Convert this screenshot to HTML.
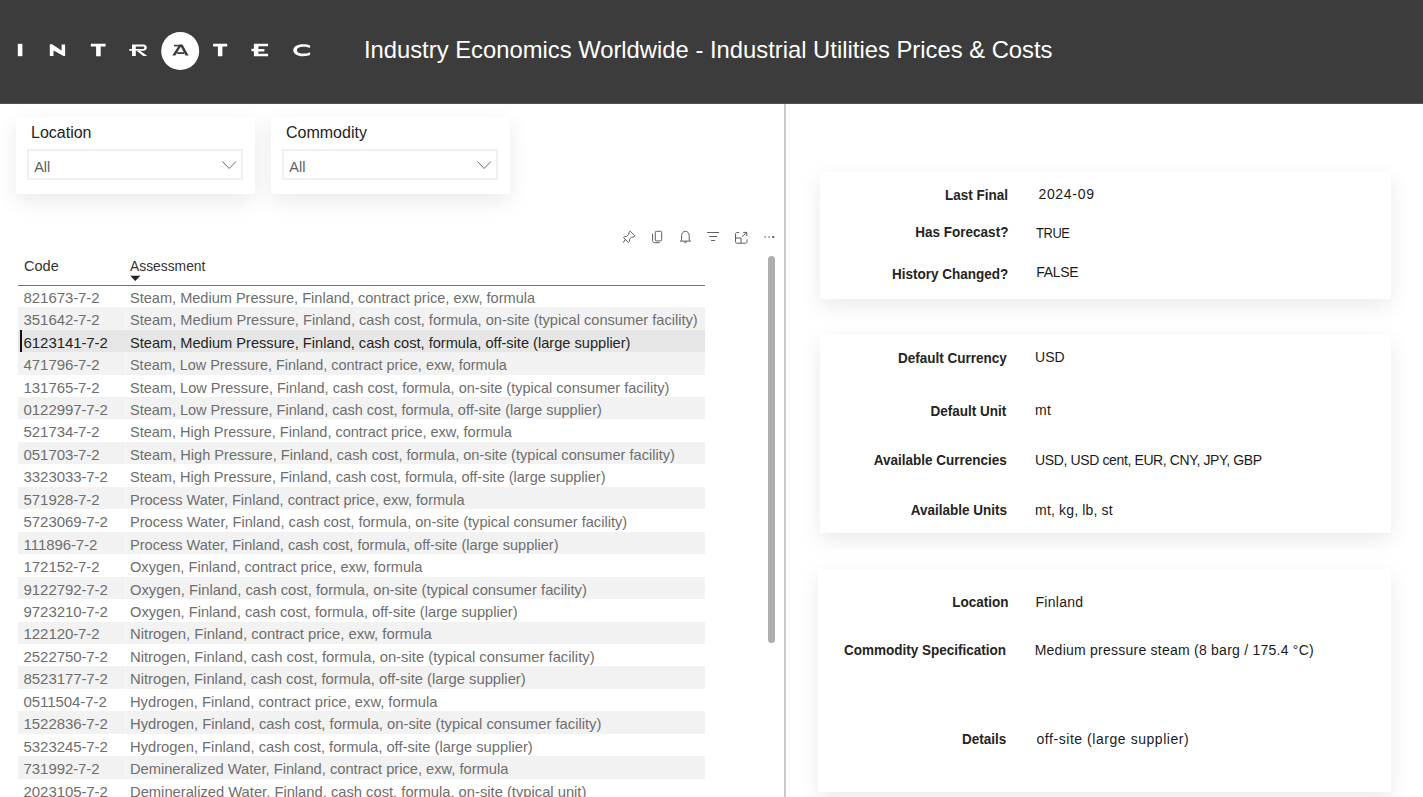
<!DOCTYPE html>
<html><head><meta charset="utf-8"><style>
html,body{margin:0;padding:0;width:1423px;height:797px;overflow:hidden;background:#fff;}
body{position:relative;font-family:"Liberation Sans",sans-serif;}
.t{position:absolute;white-space:nowrap;line-height:normal;}
.a{position:absolute;}
</style></head><body>
<div class="a" style="left:0;top:0;width:1423px;height:103px;background:#3c3c3c;"></div>
<div class="a" style="left:0;top:103px;width:1423px;height:1px;background:#0d60bd;"></div>
<svg class="a" style="left:0;top:0" width="360" height="103" viewBox="0 0 360 103">
<g fill="#fff">
<rect x="17.8" y="43.8" width="4.6" height="12.4"/>
<path d="M49.8 44.3h2.2l9.6 6.1v-5.9h3.5v11.6h-1.6l-10-5.7v5.7h-3.7z"/>
<path d="M90.8 43.8h14.8v2.6h-4.9v9.8h-4.6v-9.8h-5.3z"/>
<path d="M132 44.5h11.3c2.3 0 3.5 1.4 3.5 3.1c0 1.7-1.2 3.2-3.5 3.2h-7.5v5.3h-3.8v-5.3h-2.7v-1.8h2.7z M135.8 46.4v2.6h7.1c0.8 0 1.4-0.5 1.4-1.3s-0.6-1.3-1.4-1.3z"/>
<path d="M136.6 50.8h3.6l7 5.3h-3.9z"/>
<circle cx="180.2" cy="51" r="19"/>
<path d="M213.1 43.8h14.1v2.6h-4.8v9.8h-4.5v-9.8h-4.8z"/>
<path d="M253.9 43.8h14.2v2.5h-9.7v2.6h6v2.5h-6v2.4h9.7v2.4h-14.2v-5h-2.4v-2.5h2.4z"/>
<path d="M310.1 45.6C308.5 44.6 306.3 44.2 303.2 44.2C297 44.2 293.3 46.8 293.3 50.2C293.3 53.6 297 56.2 303.2 56.2C306.3 56.2 308.5 55.8 310.1 54.8V52.3C308.8 53 306.6 53.6 303.6 53.6C299.2 53.6 296.9 52.2 296.9 50.2C296.9 48.2 299.2 46.7 303.6 46.7C306.6 46.7 308.8 47.3 310.1 48Z"/>
</g>
<g fill="#3c3c3c">
<rect x="174" y="44.8" width="7.8" height="1.6"/>
<path d="M179.2 44.8h2.8l-6.7 10.7h-3z"/>
<path d="M179.8 44.8h2.8l6 10.7h-3.1z"/>
<rect x="177.2" y="52.2" width="6.8" height="1.8"/>
</g>
</svg>
<div class="t" style="top:36.06px;font-size:23.8px;color:#fff;left:363.90px;">Industry Economics Worldwide - Industrial Utilities Prices &amp; Costs</div>
<div class="a" style="left:784px;top:104px;width:2px;height:693px;background:#cbcbcb;"></div>
<div class="a" style="left:16px;top:117px;width:239px;height:77px;background:#fff;box-shadow:0 7px 20px rgba(0,0,0,0.085);"></div>
<div class="t" style="top:123.52px;font-size:16px;color:#252423;left:31.00px;">Location</div>
<div class="a" style="left:27.0px;top:149px;width:212.3px;height:27px;border:2px solid #f0f0f0;background:#fff;"></div>
<div class="t" style="top:158.88px;font-size:14.5px;color:#605e5c;left:34.20px;">All</div>
<svg class="a" style="left:222px;top:160px" width="16" height="12" viewBox="0 0 16 12"><path d="M0.5 1.5L7.2 8.5L13.9 1.5" fill="none" stroke="#6a6a6a" stroke-width="1"/></svg>
<div class="a" style="left:271px;top:117px;width:239px;height:77px;background:#fff;box-shadow:0 7px 20px rgba(0,0,0,0.085);"></div>
<div class="t" style="top:123.52px;font-size:16px;color:#252423;left:286.00px;">Commodity</div>
<div class="a" style="left:282.1px;top:149px;width:212.2px;height:27px;border:2px solid #f0f0f0;background:#fff;"></div>
<div class="t" style="top:158.88px;font-size:14.5px;color:#605e5c;left:289.30px;">All</div>
<svg class="a" style="left:477px;top:160px" width="16" height="12" viewBox="0 0 16 12"><path d="M0.5 1.5L7.2 8.5L13.9 1.5" fill="none" stroke="#6a6a6a" stroke-width="1"/></svg>
<svg class="a" style="left:615px;top:225px" width="170" height="25" viewBox="615 225 170 25">
<g fill="none" stroke="#605e5c" stroke-width="1">
<path d="M630.3 231.2l4.6 4.6-1.2 1.2-2.2 0.3-1.9 1.9-0.3 2.4-0.9 0.9-4.9-4.9 0.9-0.9 2.4-0.3 1.9-1.9 0.3-2.2z"/>
<path d="M625.5 239.2l-2.4 3.6"/>
<rect x="655.3" y="231.3" width="6.4" height="9.6" rx="1"/>
<path d="M652.6 233.8v6.8c0 1.2 0.9 2.1 2.1 2.1h5"/>
<path d="M681.6 240.2v-4.5c0-2.6 1.7-4.4 3.8-4.4s3.8 1.8 3.8 4.4v4.5l1.3 0.9h-10.2z"/>
<path d="M684.1 241.4c0.2 0.9 0.6 1.3 1.3 1.3s1.1-0.4 1.3-1.3"/>
<path d="M707.2 232.5h11.9M709.2 236.5h8M711.1 240.5h4"/>
<path d="M739.3 232.6h-2.3c-1 0-1.5 0.6-1.5 1.5v7.6c0 1 0.6 1.5 1.5 1.5h8.5c1 0 1.5-0.6 1.5-1.5v-2.3"/>
<path d="M735.5 238h5.5v5.2"/>
<path d="M742 236.7l4.8-4.2M743.2 232.4h3.6v3.6"/>
</g>
<circle cx="765.2" cy="237" r="1" fill="#a0a0a0"/>
<circle cx="769.1" cy="237" r="1" fill="#a0a0a0"/>
<circle cx="773.2" cy="237" r="1.1" fill="#444"/>
</svg>
<div class="t" style="top:257.43px;font-size:15px;color:#333;left:23.60px;transform:scaleX(0.97);transform-origin:left center;">Code</div>
<div class="t" style="top:257.43px;font-size:15px;color:#333;left:130.20px;transform:scaleX(0.923);transform-origin:left center;">Assessment</div>
<svg class="a" style="left:130px;top:275px" width="12" height="7" viewBox="0 0 12 7"><path d="M0.2 0.8h10.2l-5.1 5.2z" fill="#252423"/></svg>
<div class="t" style="top:288.73px;font-size:15px;color:#6e6e6e;letter-spacing:-0.08px;left:23.60px;">821673-7-2</div>
<div class="t" style="top:288.73px;font-size:15px;color:#6e6e6e;left:130.20px;transform:scaleX(0.9698);transform-origin:left center;">Steam, Medium Pressure, Finland, contract price, exw, formula</div>
<div class="a" style="left:18px;top:307.20px;width:687px;height:22.450px;background:#f2f2f2;"></div>
<div class="a" style="left:125px;top:307.20px;width:1px;height:22.450px;background:#f7f7f7;"></div>
<div class="t" style="top:311.18px;font-size:15px;color:#6e6e6e;letter-spacing:-0.08px;left:23.60px;">351642-7-2</div>
<div class="t" style="top:311.18px;font-size:15px;color:#6e6e6e;left:130.20px;transform:scaleX(0.9742);transform-origin:left center;">Steam, Medium Pressure, Finland, cash cost, formula, on-site (typical consumer facility)</div>
<div class="a" style="left:18px;top:329.65px;width:687px;height:22.450px;background:#e6e6e6;"></div>
<div class="a" style="left:18px;top:351.70px;width:687px;height:1.2px;background:#d0d0d0;"></div>
<div class="a" style="left:20px;top:330.15px;width:2px;height:21.45px;background:#111;"></div>
<div class="t" style="top:333.62px;font-size:15px;color:#252423;letter-spacing:-0.08px;left:23.60px;">6123141-7-2</div>
<div class="t" style="top:333.62px;font-size:15px;color:#252423;left:130.20px;transform:scaleX(0.9735);transform-origin:left center;">Steam, Medium Pressure, Finland, cash cost, formula, off-site (large supplier)</div>
<div class="a" style="left:18px;top:352.10px;width:687px;height:22.450px;background:#f2f2f2;"></div>
<div class="a" style="left:125px;top:352.10px;width:1px;height:22.450px;background:#f7f7f7;"></div>
<div class="t" style="top:356.07px;font-size:15px;color:#6e6e6e;letter-spacing:-0.08px;left:23.60px;">471796-7-2</div>
<div class="t" style="top:356.07px;font-size:15px;color:#6e6e6e;left:130.20px;transform:scaleX(0.9618);transform-origin:left center;">Steam, Low Pressure, Finland, contract price, exw, formula</div>
<div class="t" style="top:378.53px;font-size:15px;color:#6e6e6e;letter-spacing:-0.08px;left:23.60px;">131765-7-2</div>
<div class="t" style="top:378.53px;font-size:15px;color:#6e6e6e;left:130.20px;transform:scaleX(0.9686);transform-origin:left center;">Steam, Low Pressure, Finland, cash cost, formula, on-site (typical consumer facility)</div>
<div class="a" style="left:18px;top:397.00px;width:687px;height:22.450px;background:#f2f2f2;"></div>
<div class="a" style="left:125px;top:397.00px;width:1px;height:22.450px;background:#f7f7f7;"></div>
<div class="t" style="top:400.98px;font-size:15px;color:#6e6e6e;letter-spacing:-0.08px;left:23.60px;">0122997-7-2</div>
<div class="t" style="top:400.98px;font-size:15px;color:#6e6e6e;left:130.20px;transform:scaleX(0.9663);transform-origin:left center;">Steam, Low Pressure, Finland, cash cost, formula, off-site (large supplier)</div>
<div class="t" style="top:423.43px;font-size:15px;color:#6e6e6e;letter-spacing:-0.08px;left:23.60px;">521734-7-2</div>
<div class="t" style="top:423.43px;font-size:15px;color:#6e6e6e;left:130.20px;transform:scaleX(0.9664);transform-origin:left center;">Steam, High Pressure, Finland, contract price, exw, formula</div>
<div class="a" style="left:18px;top:441.90px;width:687px;height:22.450px;background:#f2f2f2;"></div>
<div class="a" style="left:125px;top:441.90px;width:1px;height:22.450px;background:#f7f7f7;"></div>
<div class="t" style="top:445.88px;font-size:15px;color:#6e6e6e;letter-spacing:-0.08px;left:23.60px;">051703-7-2</div>
<div class="t" style="top:445.88px;font-size:15px;color:#6e6e6e;left:130.20px;transform:scaleX(0.9726);transform-origin:left center;">Steam, High Pressure, Finland, cash cost, formula, on-site (typical consumer facility)</div>
<div class="t" style="top:468.32px;font-size:15px;color:#6e6e6e;letter-spacing:-0.08px;left:23.60px;">3323033-7-2</div>
<div class="t" style="top:468.32px;font-size:15px;color:#6e6e6e;left:130.20px;transform:scaleX(0.9673);transform-origin:left center;">Steam, High Pressure, Finland, cash cost, formula, off-site (large supplier)</div>
<div class="a" style="left:18px;top:486.80px;width:687px;height:22.450px;background:#f2f2f2;"></div>
<div class="a" style="left:125px;top:486.80px;width:1px;height:22.450px;background:#f7f7f7;"></div>
<div class="t" style="top:490.78px;font-size:15px;color:#6e6e6e;letter-spacing:-0.08px;left:23.60px;">571928-7-2</div>
<div class="t" style="top:490.78px;font-size:15px;color:#6e6e6e;left:130.20px;transform:scaleX(0.9684);transform-origin:left center;">Process Water, Finland, contract price, exw, formula</div>
<div class="t" style="top:513.22px;font-size:15px;color:#6e6e6e;letter-spacing:-0.08px;left:23.60px;">5723069-7-2</div>
<div class="t" style="top:513.22px;font-size:15px;color:#6e6e6e;left:130.20px;transform:scaleX(0.9739);transform-origin:left center;">Process Water, Finland, cash cost, formula, on-site (typical consumer facility)</div>
<div class="a" style="left:18px;top:531.70px;width:687px;height:22.450px;background:#f2f2f2;"></div>
<div class="a" style="left:125px;top:531.70px;width:1px;height:22.450px;background:#f7f7f7;"></div>
<div class="t" style="top:535.67px;font-size:15px;color:#6e6e6e;letter-spacing:-0.08px;left:23.60px;">111896-7-2</div>
<div class="t" style="top:535.67px;font-size:15px;color:#6e6e6e;left:130.20px;transform:scaleX(0.9698);transform-origin:left center;">Process Water, Finland, cash cost, formula, off-site (large supplier)</div>
<div class="t" style="top:558.12px;font-size:15px;color:#6e6e6e;letter-spacing:-0.08px;left:23.60px;">172152-7-2</div>
<div class="t" style="top:558.12px;font-size:15px;color:#6e6e6e;left:130.20px;transform:scaleX(0.9743);transform-origin:left center;">Oxygen, Finland, contract price, exw, formula</div>
<div class="a" style="left:18px;top:576.60px;width:687px;height:22.450px;background:#f2f2f2;"></div>
<div class="a" style="left:125px;top:576.60px;width:1px;height:22.450px;background:#f7f7f7;"></div>
<div class="t" style="top:580.57px;font-size:15px;color:#6e6e6e;letter-spacing:-0.08px;left:23.60px;">9122792-7-2</div>
<div class="t" style="top:580.57px;font-size:15px;color:#6e6e6e;left:130.20px;transform:scaleX(0.9822);transform-origin:left center;">Oxygen, Finland, cash cost, formula, on-site (typical consumer facility)</div>
<div class="t" style="top:603.02px;font-size:15px;color:#6e6e6e;letter-spacing:-0.08px;left:23.60px;">9723210-7-2</div>
<div class="t" style="top:603.02px;font-size:15px;color:#6e6e6e;left:130.20px;transform:scaleX(0.9775);transform-origin:left center;">Oxygen, Finland, cash cost, formula, off-site (large supplier)</div>
<div class="a" style="left:18px;top:621.50px;width:687px;height:22.450px;background:#f2f2f2;"></div>
<div class="a" style="left:125px;top:621.50px;width:1px;height:22.450px;background:#f7f7f7;"></div>
<div class="t" style="top:625.47px;font-size:15px;color:#6e6e6e;letter-spacing:-0.08px;left:23.60px;">122120-7-2</div>
<div class="t" style="top:625.47px;font-size:15px;color:#6e6e6e;left:130.20px;transform:scaleX(0.989);transform-origin:left center;">Nitrogen, Finland, contract price, exw, formula</div>
<div class="t" style="top:647.92px;font-size:15px;color:#6e6e6e;letter-spacing:-0.08px;left:23.60px;">2522750-7-2</div>
<div class="t" style="top:647.92px;font-size:15px;color:#6e6e6e;left:130.20px;transform:scaleX(0.9882);transform-origin:left center;">Nitrogen, Finland, cash cost, formula, on-site (typical consumer facility)</div>
<div class="a" style="left:18px;top:666.40px;width:687px;height:22.450px;background:#f2f2f2;"></div>
<div class="a" style="left:125px;top:666.40px;width:1px;height:22.450px;background:#f7f7f7;"></div>
<div class="t" style="top:670.38px;font-size:15px;color:#6e6e6e;letter-spacing:-0.08px;left:23.60px;">8523177-7-2</div>
<div class="t" style="top:670.38px;font-size:15px;color:#6e6e6e;left:130.20px;transform:scaleX(0.9854);transform-origin:left center;">Nitrogen, Finland, cash cost, formula, off-site (large supplier)</div>
<div class="t" style="top:692.82px;font-size:15px;color:#6e6e6e;letter-spacing:-0.08px;left:23.60px;">0511504-7-2</div>
<div class="t" style="top:692.82px;font-size:15px;color:#6e6e6e;left:130.20px;transform:scaleX(0.9807);transform-origin:left center;">Hydrogen, Finland, contract price, exw, formula</div>
<div class="a" style="left:18px;top:711.30px;width:687px;height:22.450px;background:#f2f2f2;"></div>
<div class="a" style="left:125px;top:711.30px;width:1px;height:22.450px;background:#f7f7f7;"></div>
<div class="t" style="top:715.27px;font-size:15px;color:#6e6e6e;letter-spacing:-0.08px;left:23.60px;">1522836-7-2</div>
<div class="t" style="top:715.27px;font-size:15px;color:#6e6e6e;left:130.20px;transform:scaleX(0.9851);transform-origin:left center;">Hydrogen, Finland, cash cost, formula, on-site (typical consumer facility)</div>
<div class="t" style="top:737.72px;font-size:15px;color:#6e6e6e;letter-spacing:-0.08px;left:23.60px;">5323245-7-2</div>
<div class="t" style="top:737.72px;font-size:15px;color:#6e6e6e;left:130.20px;transform:scaleX(0.9826);transform-origin:left center;">Hydrogen, Finland, cash cost, formula, off-site (large supplier)</div>
<div class="a" style="left:18px;top:756.20px;width:687px;height:22.450px;background:#f2f2f2;"></div>
<div class="a" style="left:125px;top:756.20px;width:1px;height:22.450px;background:#f7f7f7;"></div>
<div class="t" style="top:760.17px;font-size:15px;color:#6e6e6e;letter-spacing:-0.08px;left:23.60px;">731992-7-2</div>
<div class="t" style="top:760.17px;font-size:15px;color:#6e6e6e;left:130.20px;transform:scaleX(0.9775);transform-origin:left center;">Demineralized Water, Finland, contract price, exw, formula</div>
<div class="t" style="top:782.62px;font-size:15px;color:#6e6e6e;letter-spacing:-0.08px;left:23.60px;">2023105-7-2</div>
<div class="t" style="top:782.62px;font-size:15px;color:#6e6e6e;left:130.20px;transform:scaleX(0.9822);transform-origin:left center;">Demineralized Water, Finland, cash cost, formula, on-site (typical unit)</div>
<div class="a" style="left:18px;top:284.5px;width:687px;height:1.5px;background:#118dff;"></div>
<div class="a" style="left:768px;top:256px;width:7px;height:387px;border-radius:3.5px;background:#aeaeae;"></div>
<div class="a" style="left:820px;top:172px;width:571px;height:127px;background:#fff;box-shadow:0 7px 20px rgba(0,0,0,0.085);"></div>
<div class="a" style="left:820px;top:335px;width:571px;height:198px;background:#fff;box-shadow:0 7px 20px rgba(0,0,0,0.085);"></div>
<div class="a" style="left:818px;top:569px;width:573px;height:223px;background:#fff;box-shadow:0 7px 20px rgba(0,0,0,0.085);"></div>
<div class="t" style="top:185.73px;font-size:15px;color:#252423;font-weight:bold;right:414.70px;text-align:right;transform:scaleX(0.9);transform-origin:right center;">Last Final</div>
<div class="t" style="top:185.93px;font-size:14px;color:#1b1b1b;letter-spacing:0.7px;left:1038.40px;">2024-09</div>
<div class="t" style="top:223.33px;font-size:15px;color:#252423;font-weight:bold;right:414.70px;text-align:right;transform:scaleX(0.9);transform-origin:right center;">Has Forecast?</div>
<div class="t" style="top:224.53px;font-size:14px;color:#1b1b1b;letter-spacing:-0.4px;left:1036.20px;transform:scaleX(0.92);transform-origin:left center;">TRUE</div>
<div class="t" style="top:265.43px;font-size:15px;color:#252423;font-weight:bold;right:414.70px;text-align:right;transform:scaleX(0.9);transform-origin:right center;">History Changed?</div>
<div class="t" style="top:264.43px;font-size:14px;color:#1b1b1b;letter-spacing:-0.28px;left:1036.20px;">FALSE</div>
<div class="t" style="top:349.12px;font-size:15px;color:#252423;font-weight:bold;right:416.50px;text-align:right;transform:scaleX(0.9);transform-origin:right center;">Default Currency</div>
<div class="t" style="top:349.13px;font-size:14px;color:#1b1b1b;letter-spacing:0px;left:1035.10px;">USD</div>
<div class="t" style="top:401.93px;font-size:15px;color:#252423;font-weight:bold;right:416.50px;text-align:right;transform:scaleX(0.9);transform-origin:right center;">Default Unit</div>
<div class="t" style="top:402.13px;font-size:14px;color:#1b1b1b;letter-spacing:0.2px;left:1035.10px;">mt</div>
<div class="t" style="top:450.93px;font-size:15px;color:#252423;font-weight:bold;right:416.50px;text-align:right;transform:scaleX(0.9);transform-origin:right center;">Available Currencies</div>
<div class="t" style="top:451.63px;font-size:14px;color:#1b1b1b;letter-spacing:-0.38px;left:1035.10px;">USD, USD cent, EUR, CNY, JPY, GBP</div>
<div class="t" style="top:501.13px;font-size:15px;color:#252423;font-weight:bold;right:416.50px;text-align:right;transform:scaleX(0.9);transform-origin:right center;">Available Units</div>
<div class="t" style="top:501.83px;font-size:14px;color:#1b1b1b;letter-spacing:0.16px;left:1035.10px;">mt, kg, lb, st</div>
<div class="t" style="top:593.22px;font-size:15px;color:#252423;font-weight:bold;right:414.90px;text-align:right;transform:scaleX(0.9);transform-origin:right center;">Location</div>
<div class="t" style="top:594.13px;font-size:14px;color:#1b1b1b;letter-spacing:0.28px;left:1035.50px;">Finland</div>
<div class="t" style="top:641.02px;font-size:15px;color:#252423;font-weight:bold;right:417.30px;text-align:right;transform:scaleX(0.9);transform-origin:right center;">Commodity Specification</div>
<div class="t" style="top:641.73px;font-size:14px;color:#1b1b1b;letter-spacing:0.24px;left:1034.70px;">Medium pressure steam (8 barg / 175.4 °C)</div>
<div class="t" style="top:730.22px;font-size:15px;color:#252423;font-weight:bold;right:417.30px;text-align:right;transform:scaleX(0.9);transform-origin:right center;">Details</div>
<div class="t" style="top:730.63px;font-size:14px;color:#1b1b1b;letter-spacing:0.55px;left:1036.50px;">off-site (large supplier)</div>
</body></html>
